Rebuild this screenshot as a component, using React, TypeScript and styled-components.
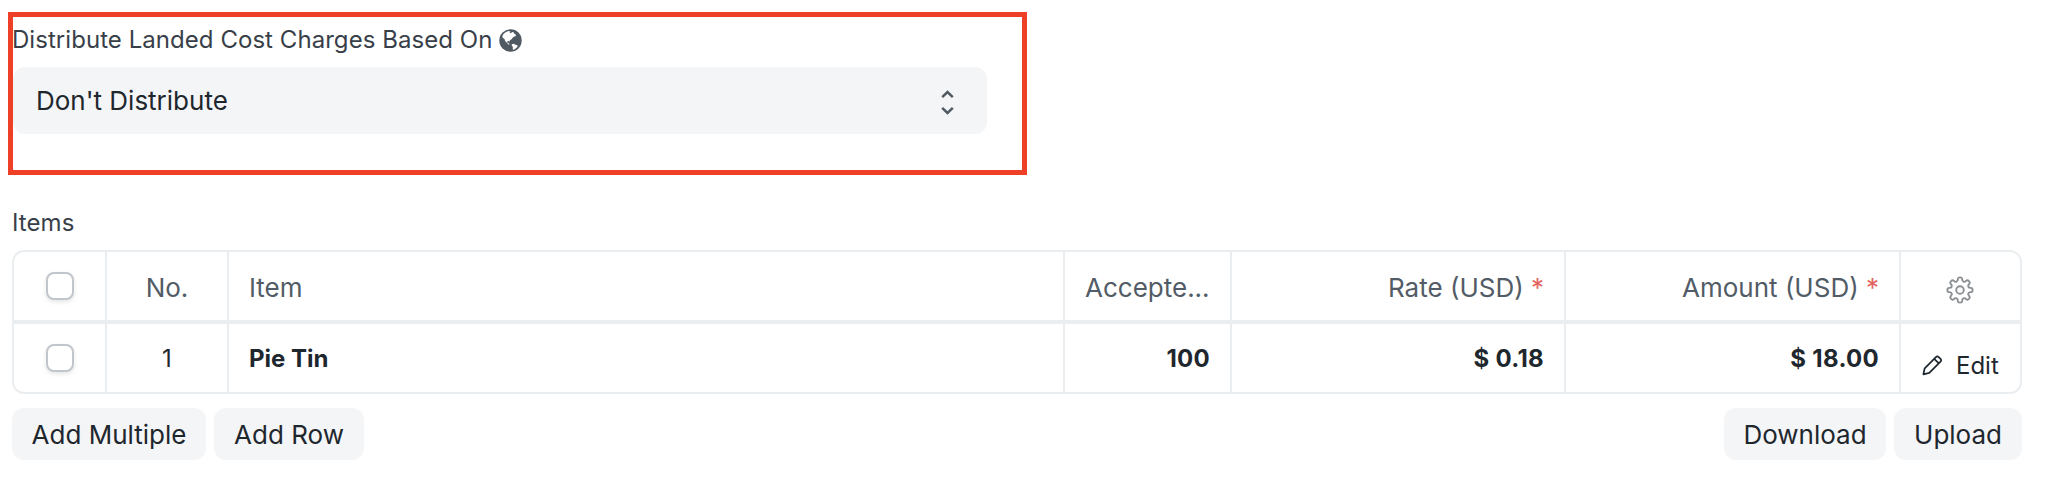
import React from "react";
import styled, { createGlobalStyle } from "styled-components";

const GlobalStyle = createGlobalStyle`
  * { box-sizing: border-box; }
  body {
    margin: 0;
    background: #fff;
    color: #1f272e;
    font-family: Inter, "Liberation Sans", sans-serif;
    -webkit-font-smoothing: antialiased;
  }
`;

const Page = styled.main`
  height: 502px;
  padding: 12px 36px 0 8px;
  overflow: hidden;
`;

const Highlight = styled.section`
  width: 1019px;
  height: 163px;
  border: 5px solid #ee4027;
`;

const Label = styled.div`
  display: flex;
  align-items: center;
  height: 30px;
  font-size: 24px;
  line-height: 30px;
  letter-spacing: 0.05px;
  color: #383f49;
`;

const FieldLabel = styled(Label)`
  margin: 8px 0 0 -1px;
  gap: 7px;
`;

const Select = styled.div`
  display: flex;
  align-items: center;
  justify-content: space-between;
  width: 974px;
  height: 67px;
  margin-top: 12px;
  padding: 0 33px 0 23px;
  border-radius: 12px;
  background: #f4f5f7;
  font-size: 26px;
`;

const Grid = styled.section`
  margin: 33px 0 0 4px;
`;

const Table = styled.div`
  margin-top: 12px;
  border: 2px solid #ebeef0;
  border-radius: 12px;
`;

const Row = styled.div<{ $head?: boolean }>`
  display: grid;
  grid-template-columns: 93px 122px 836px 167px 334px 335px 119px;
  height: ${(p) => (p.$head ? 72 : 68)}px;
  border-bottom: ${(p) => (p.$head ? "4px solid #ebeef0" : "0")};
  font-size: ${(p) => (p.$head ? 26 : 24)}px;
  color: ${(p) => (p.$head ? "#525c66" : "#1f272e")};
`;

const Cell = styled.div<{ $align?: "start" | "center" | "end"; $strong?: boolean }>`
  display: flex;
  align-items: center;
  justify-content: ${(p) => p.$align ?? "start"};
  min-width: 0;
  padding: 0 20px;
  border-right: 2px solid #ebeef0;
  font-weight: ${(p) => (p.$strong ? 700 : 400)};
  white-space: pre;
  &:last-child { border-right: 0; }
`;

const NumberCell = styled(Cell)`
  letter-spacing: 0.3px;
`;

const HeadCell = styled(Cell)`
  padding-top: 2px;
`;

const CheckCell = styled(Cell)`
  padding: 0 0 0 1px;
`;

const GearCell = styled(Cell)`
  padding: 8px 21px 0 19px;
`;

const Required = styled.span`
  color: #e2665f;
`;

const Checkbox = styled.span`
  width: 28px;
  height: 28px;
  border: 2px solid #c0c6cc;
  border-radius: 8px;
  background: #fff;
  box-shadow: 0 2px 4px rgba(0, 0, 0, 0.1);
`;

const EditCell = styled(Cell)`
  gap: 13px;
  padding: 14px 0 0 21px;
`;

const Toolbar = styled.div`
  display: flex;
  gap: 8px;
  margin-top: 14px;
`;

const Button = styled.button<{ $push?: boolean; $width: number }>`
  width: ${(p) => p.$width}px;
  height: 52px;
  margin-left: ${(p) => (p.$push ? "auto" : "0")};
  padding: 0;
  border: 0;
  border-radius: 12px;
  background: #f4f5f6;
  color: #1f272e;
  font: inherit;
  font-size: 26px;
`;

const GlobeIcon = () => (
  <svg width="23" height="23" viewBox="0 0 23 23">
    <circle cx="11.5" cy="11.5" r="11.2" fill="#505a62" />
    <path
      fill="#fff"
      d="M3.2 7.4 4.6 4.8 7 3l2.6-.9 1.8.4-.8 1.2 1.4.5 1-1.1 1.6.2.5 1.3 1.6 1 .1 1.6-1.7.4-1.4 1.2-1.2 1.5-1.6 1-.2 1.2-1.2-.5-1.2.6.3 1.4 1.4.3.6 1.1-1.1.1L7.700 13.500 6.100 11.900 5.500 10 4 8.900Z"
    />
    <path fill="#fff" d="m12.800 15.200 2.100-.4 1.700.9 2.200.7-.7 1.900-1.700 1.500-2.100 1.200-.6-1.100.2-1.800-1.200-1.500Z" />
  </svg>
);

const SelectIcon = () => (
  <svg width="13" height="28" viewBox="0 -2 13 28" fill="none" stroke="#505a62" strokeWidth="2.5">
    <path d="m1.200 8.200 5.300-5.100 5.300 5.100M1.200 18.800l5.300 5.100 5.300-5.100" />
  </svg>
);

// Eight-tooth outline; each pair is [angle offset in degrees, radius] within one tooth.
const TOOTH: [number, number][] = [
  [-13.5, 9.1],
  [-10, 12.8],
  [10, 12.8],
  [13.5, 9.1],
];

const gearPath = (() => {
  const pts: [number, number][] = [];
  for (let i = 0; i < 8; i++) {
    for (const [offset, r] of TOOTH) {
      const a = ((i * 45 + offset) * Math.PI) / 180;
      pts.push([14 + r * Math.cos(a), 14 + r * Math.sin(a)]);
    }
  }
  const mid = (a: [number, number], b: [number, number]) =>
    `${((a[0] + b[0]) / 2).toFixed(2)} ${((a[1] + b[1]) / 2).toFixed(2)}`;
  const curves = pts.map(
    (p, i) => `Q${p[0].toFixed(2)} ${p[1].toFixed(2)} ${mid(p, pts[(i + 1) % pts.length])}`
  );
  return `M${mid(pts[pts.length - 1], pts[0])}${curves.join("")}Z`;
})();

const GearIcon = () => (
  <svg width="28" height="28" viewBox="0 0 28 28" fill="none" stroke="#8b8f94" strokeWidth="1.9">
    <path d={gearPath} />
    <circle cx="14" cy="14" r="3.8" />
  </svg>
);

const PencilIcon = () => (
  <svg
    width="21"
    height="21"
    viewBox="0 0 21 21"
    fill="none"
    stroke="#1f272e"
    strokeWidth="1.7"
    strokeLinejoin="round"
  >
    <path d="M1.4 19.3 2.7 13.3 13.9 2.1Q15.3 .8 16.7 2.1L18.5 3.9Q19.8 5.3 18.5 6.7L7.3 17.9Z" />
    <path d="m12.3 3.8 4.5 4.5" />
  </svg>
);

export default function App() {
  return (
    <>
      <GlobalStyle />
      <Page>
        <Highlight>
          <FieldLabel>
            Distribute Landed Cost Charges Based On
            <GlobeIcon />
          </FieldLabel>
          <Select>
            Don't Distribute
            <SelectIcon />
          </Select>
        </Highlight>
        <Grid>
          <Label>Items</Label>
          <Table>
            <Row $head>
              <CheckCell $align="center"><Checkbox /></CheckCell>
              <HeadCell $align="center">No.</HeadCell>
              <HeadCell>Item</HeadCell>
              <HeadCell>Accepte...</HeadCell>
              <HeadCell $align="end">Rate (USD) <Required>*</Required></HeadCell>
              <HeadCell $align="end">Amount (USD) <Required>*</Required></HeadCell>
              <GearCell $align="center"><GearIcon /></GearCell>
            </Row>
            <Row>
              <CheckCell $align="center"><Checkbox /></CheckCell>
              <Cell $align="center">1</Cell>
              <Cell $strong>Pie Tin</Cell>
              <NumberCell $align="end" $strong>100</NumberCell>
              <NumberCell $align="end" $strong>$ 0.18</NumberCell>
              <NumberCell $align="end" $strong>$ 18.00</NumberCell>
              <EditCell><PencilIcon />Edit</EditCell>
            </Row>
          </Table>
          <Toolbar>
            <Button $width={194}>Add Multiple</Button>
            <Button $width={150}>Add Row</Button>
            <Button $width={162} $push>Download</Button>
            <Button $width={128}>Upload</Button>
          </Toolbar>
        </Grid>
      </Page>
    </>
  );
}
